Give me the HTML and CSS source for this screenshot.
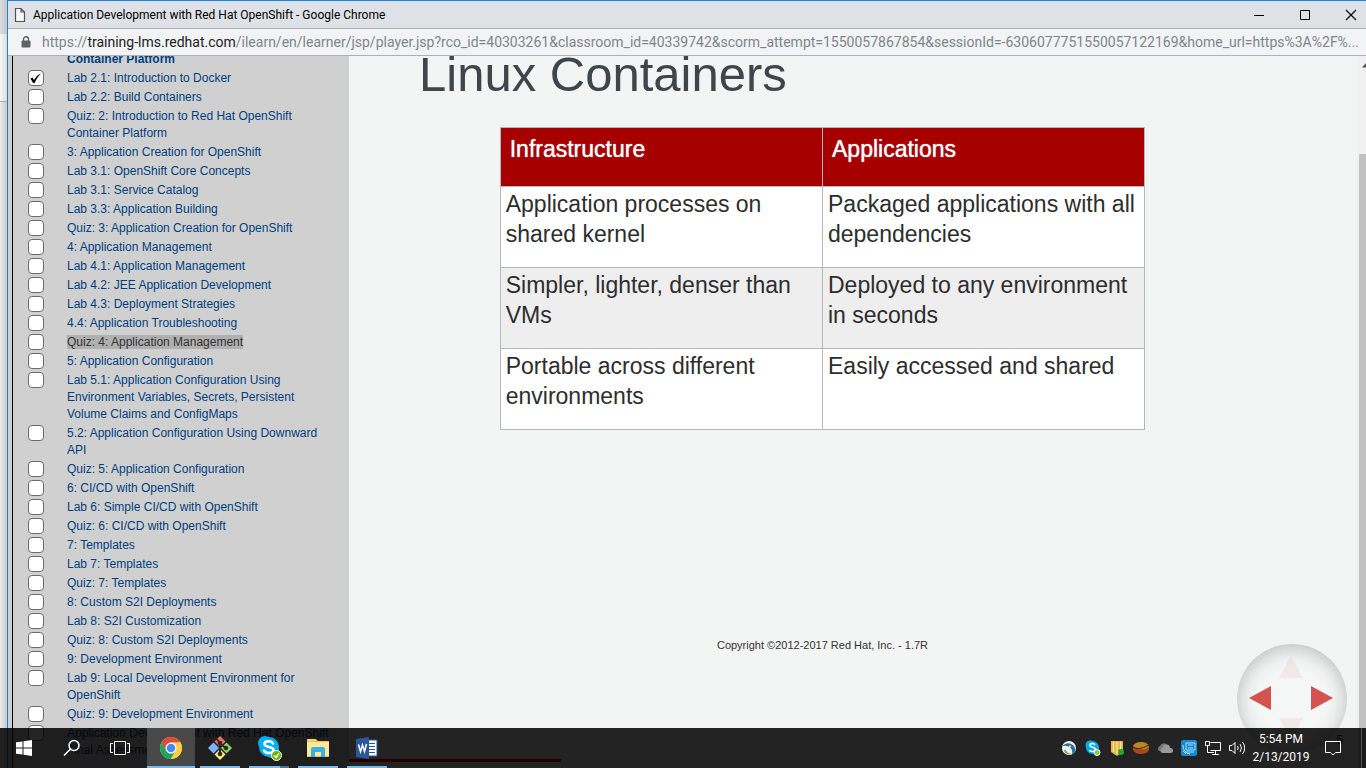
FILE: index.html
```html
<!DOCTYPE html>
<html lang="en">
<head>
<meta charset="utf-8">
<title>Application Development with Red Hat OpenShift - Google Chrome</title>
<link rel="stylesheet" href="styles.css">
</head>
<body>
<div class="desktop">
  <div class="behind"><div class="behind-title"></div><div class="behind-bar"></div><div class="behind-page"></div></div>
  <div class="window">
    <header class="titlebar">
      <svg class="page-icon" width="12" height="16" viewBox="0 0 12 16" aria-hidden="true"><path d="M1.5 1.500h5.500l3.500 3.500v9.500h-9zM7 1.500v3.500h3.500" fill="#f6f6f6" stroke="#555" stroke-width="1.200"/></svg>
      <span class="window-title">Application Development with Red Hat OpenShift - Google Chrome</span>
      <div class="window-controls">
        <button type="button" aria-label="Minimize"><svg width="12" height="12" viewBox="0 0 12 12"><path d="M1 6.500h10" stroke="#000"/></svg></button>
        <button type="button" aria-label="Maximize"><svg width="12" height="12" viewBox="0 0 12 12"><path d="M1.500 1.500h9v9h-9z" stroke="#000" fill="none"/></svg></button>
        <button type="button" aria-label="Close"><svg width="12" height="12" viewBox="0 0 12 12"><path d="M1 1l10 10M11 1L1 11" stroke="#000" stroke-width="1.200"/></svg></button>
      </div>
    </header>
    <div class="addressbar">
      <svg width="10" height="12" viewBox="0 0 10 12" aria-hidden="true"><path d="M2.500 5V3.300a2.500 2.500 0 0 1 5 0V5" fill="none" stroke="#5f6368" stroke-width="1.400"/><rect x="0.500" y="4.500" width="9" height="7" rx="1" fill="#5f6368"/></svg>
      <div class="url">https://<span class="host">training-lms.redhat.com</span>/ilearn/en/learner/jsp/player.jsp?rco_id=40303261&amp;classroom_id=40339742&amp;scorm_attempt=1550057867854&amp;sessionId=-6306077751550057122169&amp;home_url=https%3A%2F%...</div>
    </div>
    <div class="content">
      <nav class="sidebar" aria-label="Course outline">
        <ul class="outline">
          <li><span></span><a class="chapter" href="#">Container Platform</a></li>
          <li><input type="checkbox" checked aria-labelledby="l1"><a id="l1" href="#">Lab 2.1: Introduction to Docker</a></li>
          <li><input type="checkbox" aria-labelledby="l2"><a id="l2" href="#">Lab 2.2: Build Containers</a></li>
          <li><input type="checkbox" aria-labelledby="l3"><a id="l3" href="#">Quiz: 2: Introduction to Red Hat OpenShift Container Platform</a></li>
          <li><input type="checkbox" aria-labelledby="l4"><a id="l4" href="#">3: Application Creation for OpenShift</a></li>
          <li><input type="checkbox" aria-labelledby="l5"><a id="l5" href="#">Lab 3.1: OpenShift Core Concepts</a></li>
          <li><input type="checkbox" aria-labelledby="l6"><a id="l6" href="#">Lab 3.1: Service Catalog</a></li>
          <li><input type="checkbox" aria-labelledby="l7"><a id="l7" href="#">Lab 3.3: Application Building</a></li>
          <li><input type="checkbox" aria-labelledby="l8"><a id="l8" href="#">Quiz: 3: Application Creation for OpenShift</a></li>
          <li><input type="checkbox" aria-labelledby="l9"><a id="l9" href="#">4: Application Management</a></li>
          <li><input type="checkbox" aria-labelledby="l10"><a id="l10" href="#">Lab 4.1: Application Management</a></li>
          <li><input type="checkbox" aria-labelledby="l11"><a id="l11" href="#">Lab 4.2: JEE Application Development</a></li>
          <li><input type="checkbox" aria-labelledby="l12"><a id="l12" href="#">Lab 4.3: Deployment Strategies</a></li>
          <li><input type="checkbox" aria-labelledby="l13"><a id="l13" href="#">4.4: Application Troubleshooting</a></li>
          <li><input type="checkbox" aria-labelledby="l14"><a id="l14" href="#"><span class="current">Quiz: 4: Application Management</span></a></li>
          <li><input type="checkbox" aria-labelledby="l15"><a id="l15" href="#">5: Application Configuration</a></li>
          <li><input type="checkbox" aria-labelledby="l16"><a id="l16" href="#">Lab 5.1: Application Configuration Using Environment Variables, Secrets, Persistent Volume Claims and ConfigMaps</a></li>
          <li><input type="checkbox" aria-labelledby="l17"><a id="l17" href="#">5.2: Application Configuration Using Downward API</a></li>
          <li><input type="checkbox" aria-labelledby="l18"><a id="l18" href="#">Quiz: 5: Application Configuration</a></li>
          <li><input type="checkbox" aria-labelledby="l19"><a id="l19" href="#">6: CI/CD with OpenShift</a></li>
          <li><input type="checkbox" aria-labelledby="l20"><a id="l20" href="#">Lab 6: Simple CI/CD with OpenShift</a></li>
          <li><input type="checkbox" aria-labelledby="l21"><a id="l21" href="#">Quiz: 6: CI/CD with OpenShift</a></li>
          <li><input type="checkbox" aria-labelledby="l22"><a id="l22" href="#">7: Templates</a></li>
          <li><input type="checkbox" aria-labelledby="l23"><a id="l23" href="#">Lab 7: Templates</a></li>
          <li><input type="checkbox" aria-labelledby="l24"><a id="l24" href="#">Quiz: 7: Templates</a></li>
          <li><input type="checkbox" aria-labelledby="l25"><a id="l25" href="#">8: Custom S2I Deployments</a></li>
          <li><input type="checkbox" aria-labelledby="l26"><a id="l26" href="#">Lab 8: S2I Customization</a></li>
          <li><input type="checkbox" aria-labelledby="l27"><a id="l27" href="#">Quiz: 8: Custom S2I Deployments</a></li>
          <li><input type="checkbox" aria-labelledby="l28"><a id="l28" href="#">9: Development Environment</a></li>
          <li><input type="checkbox" aria-labelledby="l29"><a id="l29" href="#">Lab 9: Local Development Environment for OpenShift</a></li>
          <li><input type="checkbox" aria-labelledby="l30"><a id="l30" href="#">Quiz: 9: Development Environment</a></li>
          <li><input type="checkbox" aria-labelledby="l31"><a id="l31" href="#">Application Development with Red Hat OpenShift Final Assessment</a></li>
        </ul>
      </nav>
      <main class="slide">
        <h1>Linux Containers</h1>
        <table>
          <thead><tr><th scope="col">Infrastructure</th><th scope="col">Applications</th></tr></thead>
          <tbody>
            <tr><td>Application processes on shared kernel</td><td>Packaged applications with all dependencies</td></tr>
            <tr><td>Simpler, lighter, denser than VMs</td><td>Deployed to any environment in seconds</td></tr>
            <tr><td>Portable across different environments</td><td>Easily accessed and shared</td></tr>
          </tbody>
        </table>
        <p class="copyright">Copyright ©2012-2017 Red Hat, Inc. - 1.7R</p>
        <div class="wheel">
          <button type="button" class="up" aria-label="Up" disabled><svg width="24" height="22" viewBox="0 0 24 22"><path d="M12 0l12 22H0z"/></svg></button>
          <button type="button" class="left" aria-label="Previous slide"><svg width="22" height="24" viewBox="0 0 22 24"><path d="M22 0v24L0 12z"/></svg></button>
          <button type="button" class="right" aria-label="Next slide"><svg width="22" height="24" viewBox="0 0 22 24"><path d="M0 0v24l22-12z"/></svg></button>
          <button type="button" class="down" aria-label="Down" disabled><svg width="24" height="22" viewBox="0 0 24 22"><path d="M0 0h24L12 22z"/></svg></button>
        </div>
        <span class="slide-number">5</span>
      </main>
      <div class="scrollbar">
        <svg width="8" height="5" viewBox="0 0 8 5" aria-hidden="true"><path d="M4 0l4 4.500H0z" fill="#505050"/></svg>
        <div class="thumb"></div>
      </div>
    </div>
  </div>
</div>
<footer class="taskbar">
  <div class="progress"></div>
  <div class="system">
    <button type="button" aria-label="Start"><svg width="16" height="16" viewBox="0 0 16 16"><path d="M0 2.300L6.500 1.400v6.100H0zM7.500 1.200L16 0v7.500H7.500zM0 8.500h6.500v6.100L0 13.700zM7.500 8.500H16V16l-8.500-1.200z" fill="#fff"/></svg></button>
    <button type="button" aria-label="Search"><svg width="18" height="18" viewBox="0 0 18 18"><circle cx="11" cy="6.500" r="5" fill="none" stroke="#fff" stroke-width="1.500"/><path d="M7.500 10L1 16.500" stroke="#fff" stroke-width="1.600"/></svg></button>
    <button type="button" aria-label="Task View"><svg width="20" height="16" viewBox="0 0 20 16"><path d="M4.500 1.500h11v13h-11zM3 3.500H.5v9H3M17 3.500h2.500v9H17" fill="none" stroke="#fff"/></svg></button>
  </div>
  <div class="apps">
    <button type="button" class="active" aria-label="Chrome"><svg width="24" height="24" viewBox="0 0 24 24"><circle cx="12" cy="12" r="11" fill="#ffcf3f"/><path d="M2.500 6.500A11 11 0 0 1 21.500 6.500H12L7.200 14.700z" fill="#dd4b3e"/><path d="M2.500 6.500l4.700 8.300a5.500 5.500 0 0 0 9.600 0L11.800 23A11 11 0 0 1 2.500 6.500" fill="#1da462"/><path d="M12 6.500h9.500A11 11 0 0 1 11.800 23l5-8.200z" fill="#ffcf3f"/><circle cx="12" cy="12" r="5.500" fill="#fff"/><circle cx="12" cy="12" r="4.300" fill="#4688f4"/></svg></button>
    <button type="button" aria-label="Git"><svg width="26" height="26" viewBox="0 0 26 26"><path d="M13 1l5.500 5.500L13 12 7.500 6.500z" fill="#f26b6b"/><path d="M6.500 7.500L12 13l-5.500 5.500L1 13z" fill="#80b3ff"/><path d="M19.500 7.500L25 13l-5.500 5.500L14 13z" fill="#8dd35f"/><path d="M13 14l5.500 5.500L13 25l-5.500-5.500z" fill="#ffe680"/><path d="M9 3l4 5v11M13 9l6 4" stroke="#302b25" stroke-width="2" fill="none"/><circle cx="13" cy="8" r="2.300" fill="#302b25"/><circle cx="13" cy="19" r="2.300" fill="#302b25"/><circle cx="19" cy="13" r="2.300" fill="#302b25"/></svg></button>
    <button type="button" class="grouped" aria-label="Skype"><svg width="26" height="26" viewBox="0 0 26 26"><circle cx="9" cy="8" r="7" fill="#00aff0"/><circle cx="16" cy="16" r="7" fill="#00aff0"/><circle cx="13" cy="12" r="10" fill="#00aff0"/><path d="M17 8.500C15.500 5.500 8.500 5.500 8.500 9c0 4 9 2 9 6 0 4-8 4-9.500.5" fill="none" stroke="#fff" stroke-width="2.600" stroke-linecap="round"/><circle cx="20.500" cy="20.500" r="5" fill="#6bb700" stroke="#fff"/><path d="M18 20.500l2 2 3-4" fill="none" stroke="#fff" stroke-width="1.500"/></svg></button>
    <button type="button" aria-label="File Explorer"><svg width="24" height="22" viewBox="0 0 24 22"><path d="M1 2h9l2 2h11v16H1z" fill="#f0bd45"/><path d="M1 5h22v14H1z" fill="#ffe79a"/><path d="M2 3h7" stroke="#fff1b8"/><path d="M5 20v-8q0-2 2-2h10q2 0 2 2v8h-4v-5H9v5z" fill="#35b1e8"/></svg></button>
    <button type="button" aria-label="Word"><svg width="24" height="24" viewBox="0 0 24 24"><path d="M13 4h9v16h-9z" fill="#fff" stroke="#2b579a"/><path d="M14 7.500h6M14 10.500h6M14 13.500h6M14 16.500h6" stroke="#2b579a"/><path d="M1 3l13-2v22L1 21z" fill="#2b579a"/><path d="M3.500 8.500l2 7L7.500 9l2 6.500 2-7.500" fill="none" stroke="#fff" stroke-width="1.500"/></svg></button>
  </div>
  <div class="tray">
    <svg viewBox="0 0 16 16"><circle cx="8" cy="8" r="7" fill="#eef4f3"/><path d="M1.500 6Q4 2.500 9 3.500q6 2 5 8-1 2-3 3 1-5-2-7Q6 5 1.500 6z" fill="#2f6f9a"/><path d="M4 9q2 4 6 5-5 1-7-3z" fill="#6fb445"/><circle cx="9" cy="6.500" r="1" fill="#fff"/></svg>
    <svg viewBox="0 0 16 16"><circle cx="5" cy="5" r="4.500" fill="#00aff0"/><circle cx="7.500" cy="7.500" r="6.500" fill="#00aff0"/><path d="M10 5C9 3 5 3 5 5.500c0 2.500 5.500 1 5.500 4 0 2.500-5 2.500-6 .5" fill="none" stroke="#fff" stroke-width="1.600"/><circle cx="12" cy="12.500" r="3" fill="#8cc63f" stroke="#fff"/></svg>
    <svg viewBox="0 0 16 16"><path d="M2 1h12v11l-6 4-6-4z" fill="#e8b84a"/><path d="M4.500 2v10M8 2v12M11.500 2v8" stroke="#fff0b3"/><circle cx="12" cy="12" r="3" fill="#1dac26"/></svg>
    <svg viewBox="0 0 16 16"><path d="M0 6v4q2 4 8 4t8-4V5z" fill="#a34a20"/><path d="M0 6q2-4 8-4t8 4q-2 4-8 3T0 6z" fill="#b8871e"/><path d="M0 7q5 4 16-2" stroke="#422315" fill="none"/></svg>
    <svg viewBox="0 0 16 16"><path d="M2 11a3 3 0 0 1 1-5 4 4 0 0 1 7-1l-5 6z" fill="#777"/><path d="M6 13a2.500 2.500 0 0 1 0-5 3.500 3.500 0 0 1 7 0 2.500 2.500 0 0 1 1 5z" fill="#999"/></svg>
    <svg viewBox="0 0 16 16"><rect width="16" height="16" rx="2" fill="#1689cf"/><path d="M5 3h9v7H5zM4 12h9M2 5q0 8 7 9M7 5h5M7 8h5" fill="none" stroke="#a8dfff"/><path d="M2 11l3 3" stroke="#e5d36e"/></svg>
    <svg viewBox="0 0 16 16"><path d="M5.500 2.500h10v8h-10M10.500 11v3M7 14.500h7M.5 1.500h4v4h-4zM2.500 6v6.500H9" fill="none" stroke="#fff"/></svg>
    <svg viewBox="0 0 16 16"><path d="M.5 5.500h2.500l3-3v11l-3-3H.5zM8.500 6q1.500 2 0 4M11 4q3 4 0 8M13.500 2q4.500 6 0 12" fill="none" stroke="#fff"/></svg>
    <div class="clock"><span>5:54 PM</span><span>2/13/2019</span></div>
    <button type="button" aria-label="Notifications"><svg viewBox="0 0 16 16"><path d="M.5 1.500h15v11h-5L8 15l-2.500-2.500h-5z" fill="none" stroke="#fff"/></svg></button>
    <div class="show-desktop"></div>
  </div>
</footer>
</body>
</html>
```
FILE: styles.css
```css
* { box-sizing: border-box; }
body {
  margin: 0;
  height: 100vh;
  overflow: hidden;
  position: relative;
  font-family: "Liberation Sans", Arial, sans-serif;
}
button {
  padding: 0;
  border: 0;
  background: none;
  display: flex;
  align-items: center;
  justify-content: center;
}
.desktop { display: grid; grid-template-columns: 7px 1fr; height: 100%; }

/* Sliver of the window underneath */
.behind { display: flex; flex-direction: column; }
.behind-title { height: 34px; background: linear-gradient(90deg, #dadde0, #c4c7ca); }
.behind-bar { height: 68px; background: linear-gradient(90deg, #f8f8f8, #dddddd); border-bottom: 1px solid #aaa; }
.behind-page { flex: 1; background: linear-gradient(90deg, #ececec, #c8c8c8); }

.window {
  display: flex;
  flex-direction: column;
  min-width: 0;
  min-height: 0;
  overflow: hidden;
  border-top: 1px solid #1883d7;
  border-left: 1px solid #1883d7;
}
.titlebar {
  display: flex;
  align-items: center;
  flex: none;
  height: 28px;
  padding-left: 6px;
  gap: 7px;
  background: #dee1e6;
  border-bottom: 1px solid #b0b2b5;
}
.window-title { flex: 1; font: 12px/16px Roboto, "Open Sans", sans-serif; color: #000; white-space: nowrap; }
.window-controls { display: flex; margin-right: -8px; }
.window-controls button { width: 46px; height: 27px; }
.addressbar {
  display: flex;
  align-items: center;
  flex: none;
  gap: 11px;
  height: 27px;
  padding: 0 8px 0 13px;
  background: #f1f3f4;
  border-bottom: 1px solid #aeb0b2;
}
.url {
  flex: 1;
  overflow: hidden;
  white-space: nowrap;
  font: 14px/20px Roboto, "Open Sans", sans-serif;
  color: #80868b;
}
.host { color: #202124; }

.content { display: flex; flex: 1; min-height: 0; }
.sidebar {
  flex: none;
  width: 341px;
  overflow: hidden;
  background: #d0d0d0;
  border-left: 4px solid #d0d0d0;
  box-shadow: inset 1px 0 #000;
}
.outline {
  display: flex;
  flex-direction: column;
  gap: 2px;
  list-style: none;
  margin: -5px 0 0;
  padding: 0 16px;
  font-size: 12px;
  line-height: 17px;
}
.outline li { display: grid; grid-template-columns: 16px 1fr; column-gap: 23px; align-items: start; justify-items: start; }
.outline input {
  appearance: none;
  width: 16px;
  height: 16px;
  margin: 0;
  border: 1px solid #6c6c6c;
  border-radius: 4px;
  background: #fff;
}
.outline input:checked {
  background: #fff url("data:image/svg+xml,%3Csvg xmlns='http://www.w3.org/2000/svg' viewBox='0 0 14 14'%3E%3Cpath d='M1.500 7.500l2-1 1.500 2.500Q8 4 12 2 8.500 6 5.500 12H4z' fill='black'/%3E%3C/svg%3E");
}
.outline a { color: #004080; text-decoration: none; }
.outline .chapter { font-weight: bold; }
.outline .current { background: #b0b0b0; color: #333; }

.slide {
  position: relative;
  flex: 1;
  min-width: 0;
  overflow: hidden;
  padding: 0 131px 0 70px;
  background: #f3f5f4;
}
h1 { margin: 0 0 34px; font-size: 49px; line-height: 37px; font-weight: normal; color: #40454c; }
table {
  width: 80%;
  margin: 0 auto;
  border-collapse: collapse;
  table-layout: fixed;
  font-size: 23px;
  line-height: 30px;
  color: #2d2d2d;
}
th, td { border: 1px solid #b4b8ba; text-align: left; vertical-align: top; font-weight: normal; }
th { padding: 6px 9px 22px; background: #a60000; color: #fff; text-shadow: 0 0 1px #fff; }
td { padding: 2px 5px 18px; background: #fff; }
tbody tr:nth-child(even) td { background: #eee; }
.copyright { margin: 207px 0 0; text-align: center; font-size: 11px; line-height: 16px; color: #333; }

/* Slide navigation floats over the lower right corner */
.wheel {
  position: absolute;
  right: 10px;
  bottom: 14px;
  display: grid;
  grid-template-columns: repeat(3, 1fr);
  grid-template-rows: repeat(3, 1fr);
  place-items: center;
  width: 110px;
  height: 110px;
  padding: 8px 10px 10px 8px;
  border-radius: 50%;
  background: #f5f6f6;
  box-shadow: inset 0 3px 20px #b8bab9;
}
.wheel svg { fill: #d45351; }
.wheel .up { grid-area: 1 / 2; }
.wheel .left { grid-area: 2 / 1; }
.wheel .right { grid-area: 2 / 3; }
.wheel .down { grid-area: 3 / 2; }
.wheel button:disabled { opacity: 0.08; }
.slide-number { position: absolute; right: 14px; bottom: 20px; font-size: 12px; line-height: 16px; color: #333; }

.scrollbar {
  display: flex;
  flex-direction: column;
  flex: none;
  width: 9px;
  padding: 7px 0 0 2px;
  overflow: hidden;
  background: #f1f1f1;
}
.scrollbar svg { flex: none; margin-left: 3px; }
.thumb { flex: 1; margin-top: 86px; background: #c1c1c1; }

.taskbar {
  position: absolute;
  left: 0;
  right: 0;
  bottom: 0;
  display: flex;
  height: 40px;
  background: rgba(0, 0, 0, 0.86);
}
.taskbar svg { flex: none; }
.progress { position: absolute; left: 349px; bottom: 6px; width: 212px; height: 3px; background: #220000; }
.system { display: flex; }
.system button { width: 48px; }
.apps { display: flex; gap: 1px; margin-left: 3px; flex: 1; }
.apps button { position: relative; width: 48px; }
.apps button::after {
  content: "";
  position: absolute;
  left: 4px;
  right: 4px;
  bottom: 0;
  height: 2px;
  background: #76b9ed;
}
.apps .active { background: #484848; }
.apps .active::after { left: 0; right: 0; }
.apps .grouped::after { background: linear-gradient(90deg, #76b9ed 31px, #4a7295 31px); }
.tray { display: flex; align-items: center; gap: 8px; }
.tray svg { width: 16px; height: 16px; }
.clock {
  display: flex;
  flex-direction: column;
  align-items: center;
  width: 56px;
  margin: 0 8px 0 0;
  font: 12px/18px Roboto, "Open Sans", sans-serif;
  color: #fff;
  white-space: nowrap;
}
.show-desktop { align-self: stretch; width: 5px; margin-left: 12px; border-left: 1px solid #555; }
```
